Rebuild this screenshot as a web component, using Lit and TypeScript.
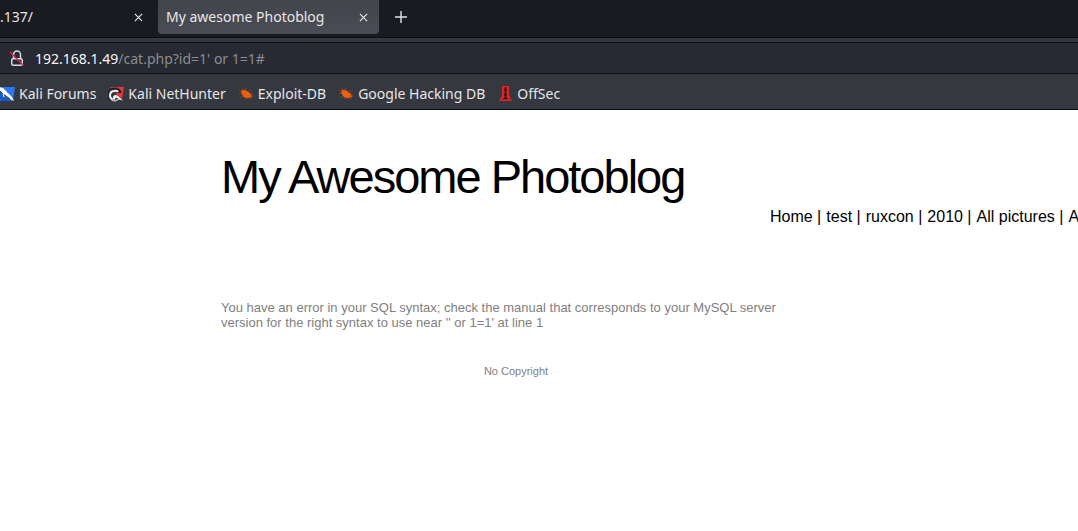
import { LitElement, html, css, svg } from "lit";
import { customElement } from "lit/decorators.js";

const closeIcon = html`<svg class="close-icon" viewBox="0 0 10 10" aria-hidden="true">
  <path d="M1 1 L9 9 M9 1 L1 9" fill="none" stroke="currentColor" stroke-width="1.3" />
</svg>`;

const forumsIcon = svg`
  <path d="M0 1H16L14 15H0Z" fill="#2878f0" />
  <path d="M0 5L4 9L8 12L14 15H3L0 14Z" fill="#1d58bd" />
  <path d="M0 1L4 2L7 5L10 8L13 11L15 15L11 13L7 10L4 8L0 4Z" fill="#fff" />
  <path d="M0 4L4 8L7 10L11 13" fill="none" stroke="#30333c" stroke-width="1" />
  <path d="M4 8L5 11" stroke="#fff" stroke-width="1" />`;

const hunterIcon = svg`
  <path d="M2 1H16L14 13L8 8Z" fill="#ee3136" />
  <path d="M3 13C0 9 2 4 7 4C10 4 11 6 11 7" fill="none" stroke="#22242c" stroke-width="5" />
  <path d="M5 14C0 11 2 5 6 5C9 4 10 6 10 6" fill="none" stroke="#f4f4f5" stroke-width="2" />
  <path d="M5 13C4 9 8 8 10 10L15 14.500L11 13.500C9 11 7 11 7 14Z" fill="#f4f4f5" />
  <path d="M4 14L7 15L11 13" fill="none" stroke="#c9cace" stroke-width="1.200" />`;

const bugIcon = svg`
  <path d="M3 6C4 3 7 4 9 5L13 8L14 11L11 12C8 13 6 11 5 10Z" fill="#ee5e0e" />
  <path d="M4 5L1 4M4 7L1 8M5 9L3 12M8 11L7 13M7 4L8 2M10 6L13 4M12 8L15 7M11 11L14 13M13 10L16 10M5 4L4 2"
    fill="none" stroke="#a64a1c" stroke-width="0.700" />`;

const offsecIcon = svg`
  <path d="M5 0H12V8L15 15H2L5 9Z" fill="#d9262b" />
  <path d="M8 1H9L10 4L9 6L10 9L9 11L11 13H6L8 11L7 9L8 6L7 4Z" fill="#2a1519" />
  <path d="M3 13.500H14" stroke="#b02028" stroke-width="1" />`;

const bookmarks = [
  { label: "Kali Forums", icon: forumsIcon },
  { label: "Kali NetHunter", icon: hunterIcon },
  { label: "Exploit-DB", icon: bugIcon },
  { label: "Google Hacking DB", icon: bugIcon },
  { label: "OffSec", icon: offsecIcon },
];

@customElement("browser-chrome")
export class BrowserChrome extends LitElement {
  static styles = css`
    :host {
      display: block;
      font: 14px/20px "Noto Sans", sans-serif;
      color: #e6e6e8;
      background: #35383f;
    }
    button {
      display: flex;
      align-items: center;
      justify-content: center;
      width: 20px;
      height: 20px;
      padding: 0;
      border: 0;
      background: none;
      color: #e6e6e8;
    }
    .tabs {
      display: flex;
      height: 37px;
      background: #1a1b20;
      border-bottom: 1px solid #0d0e12;
    }
    .tab {
      display: flex;
      justify-content: space-between;
      align-items: center;
      box-sizing: border-box;
      height: 34px;
    }
    .first {
      width: 148px;
      margin-right: 10px;
    }
    .active {
      width: 221px;
      padding: 0 6px 0 8px;
      border-radius: 0 0 4px 4px;
      background: linear-gradient(#41444b, #4a4d55);
    }
    .new-tab {
      margin: 7px 0 0 12px;
    }
    .close-icon {
      width: 9px;
      height: 9px;
    }
    .plus {
      width: 14px;
      height: 14px;
    }
    .address {
      display: flex;
      align-items: center;
      gap: 10px;
      height: 28px;
      margin-top: 4px;
      padding: 2px 0 0 9px;
      border: solid #0d0e12;
      border-width: 1px 0;
      background: #272933;
    }
    .lock {
      width: 16px;
      height: 18px;
    }
    .url {
      color: #8b8c94;
    }
    .host {
      color: #f6f6f7;
    }
    .bookmarks {
      display: flex;
      align-items: center;
      gap: 12px;
      height: 35px;
      margin-left: -1px;
      padding-top: 4px;
      box-sizing: border-box;
    }
    .bookmarks a {
      display: flex;
      align-items: center;
      gap: 4px;
      color: inherit;
      text-decoration: none;
      white-space: nowrap;
    }
    .favicon {
      width: 16px;
      height: 16px;
    }
    .edge {
      height: 1px;
      background: #0d0e12;
    }
  `;

  render() {
    return html`
      <div class="tabs">
        <div class="tab first">
          <span>.137/</span>
          <button aria-label="Close tab">${closeIcon}</button>
        </div>
        <div class="tab active">
          <span>My awesome Photoblog</span>
          <button aria-label="Close tab">${closeIcon}</button>
        </div>
        <button class="new-tab" aria-label="New tab">
          <svg class="plus" viewBox="0 0 14 14" aria-hidden="true">
            <path d="M7 1V13M1 7H13" stroke="currentColor" stroke-width="1.4" />
          </svg>
        </button>
      </div>
      <div class="address">
        <svg class="lock" viewBox="0 0 16 18" aria-hidden="true">
          <rect x="2.750" y="8.750" width="10.500" height="6.500" rx="1.500" fill="none" stroke="#dcdce0" stroke-width="1.500" />
          <path d="M4.500 8.500V4.500A3.500 3.500 0 0 1 11.500 4.500V8.500" fill="none" stroke="#dcdce0" stroke-width="1.500" />
          <path d="M1 2L14.500 15.500" stroke="#e22850" stroke-width="1.400" />
        </svg>
        <span class="url"><span class="host">192.168.1.49</span>/cat.php?id=1' or 1=1#</span>
      </div>
      <nav class="bookmarks" aria-label="Bookmarks">
        ${bookmarks.map(
          (b) => html`<a href="#"
            ><svg class="favicon" viewBox="0 0 16 16" aria-hidden="true">${b.icon}</svg>${b.label}</a
          >`
        )}
      </nav>
      <div class="edge"></div>
    `;
  }
}

@customElement("app-root")
export class AppRoot extends LitElement {
  static styles = css`
    :host {
      display: block;
      min-height: 100vh;
      overflow: hidden;
      background: #fff;
      font: 13px/15px "Liberation Sans", Arial, sans-serif;
      color: #808080;
    }
    .page {
      padding: 40px 0 40px 20.5%;
    }
    h1 {
      margin: 0;
      font-size: 47px;
      line-height: 54px;
      font-weight: 400;
      letter-spacing: -2px;
      color: #000;
      white-space: nowrap;
    }
    .menu {
      display: flex;
      gap: 5px;
      margin: 4px 0 0 549px;
      padding: 0;
      list-style: none;
      font-size: 16px;
      line-height: 18px;
      color: #000;
      white-space: nowrap;
    }
    .menu a {
      color: inherit;
      text-decoration: none;
    }
    .column {
      max-width: 590px;
    }
    .message {
      margin: 74px 0 0;
      padding-right: 20px;
    }
    footer {
      margin-top: 34px;
      font-size: 11px;
      text-align: center;
    }
  `;

  render() {
    return html`
      <browser-chrome></browser-chrome>
      <main class="page">
        <h1>My Awesome Photoblog</h1>
        <nav>
          <ul class="menu">
            ${["Home", "test", "ruxcon", "2010", "All pictures"].map(
              (name) => html`<li><a href="#">${name}</a> |</li>`
            )}
            <li><a href="#">Admin</a></li>
          </ul>
        </nav>
        <div class="column">
          <p class="message">
            You have an error in your SQL syntax; check the manual that corresponds to your MySQL server version
            for the right syntax to use near '' or 1=1' at line 1
          </p>
          <footer>No Copyright</footer>
        </div>
      </main>
    `;
  }
}
